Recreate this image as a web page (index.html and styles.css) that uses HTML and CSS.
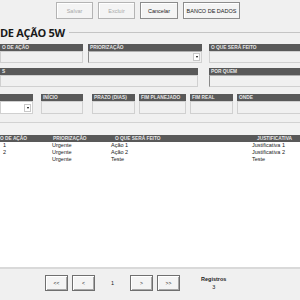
FILE: index.html
```html
<!doctype html>
<html lang="pt">

<head>
  <title>Plano de Ação 5W</title>
  <meta charset="utf-8">
  <link rel="stylesheet" href="styles.css">
</head>

<body>
  <div class="page">
    <div class="toolbar">
      <button class="btn btn-top btn-salvar" disabled>Salvar</button>
      <button class="btn btn-top btn-excluir" disabled>Excluir</button>
      <button class="btn btn-top btn-cancelar">Cancelar</button>
      <button class="btn btn-top btn-banco">BANCO DE DADOS</button>
    </div>

    <div class="group-title">
      <span class="title">DE AÇÃO 5W</span>
      <span class="rule"></span>
    </div>

    <!-- linha 1 -->
    <div class="form-row row-1">
      <div class="field f-tipo">
        <div class="field-label">O DE AÇÃO</div>
        <div class="field-input"></div>
      </div>
      <div class="field f-prior">
        <div class="field-label">PRIORIZAÇÃO</div>
        <div class="field-input sunken select">
          <span class="drop"></span>
        </div>
      </div>
      <div class="field f-oque">
        <div class="field-label">O QUE SERÁ FEITO</div>
        <div class="field-input"></div>
      </div>
    </div>

    <!-- linha 2 -->
    <div class="form-row row-2">
      <div class="field f-just">
        <div class="field-label">S</div>
        <div class="field-input"></div>
      </div>
      <div class="field f-quem">
        <div class="field-label">POR QUEM</div>
        <div class="field-input sunken"></div>
      </div>
    </div>

    <!-- linha 3 -->
    <div class="form-row row-3">
      <div class="field f-resp">
        <div class="field-label"></div>
        <div class="field-input select white">
          <span class="drop"></span>
        </div>
      </div>
      <div class="field f-inicio">
        <div class="field-label">INÍCIO</div>
        <div class="field-input"></div>
      </div>
      <div class="field f-prazo">
        <div class="field-label">PRAZO (DIAS)</div>
        <div class="field-input"></div>
      </div>
      <div class="field f-fimplan">
        <div class="field-label">FIM PLANEJADO</div>
        <div class="field-input"></div>
      </div>
      <div class="field f-fimreal">
        <div class="field-label">FIM REAL</div>
        <div class="field-input"></div>
      </div>
      <div class="field f-onde">
        <div class="field-label">ONDE</div>
        <div class="field-input"></div>
      </div>
    </div>

    <div class="grid-panel">
      <div class="grid-strip"></div>
      <div class="grid">
        <div class="grid-head">
          <div class="col c1 head-c1">O DE AÇÃO</div>
          <div class="col c2">PRIORIZAÇÃO</div>
          <div class="col c3">O QUE SERÁ FEITO</div>
          <div class="col c4">JUSTIFICATIVA</div>
        </div>
        <div class="grid-row">
          <div class="col c1">1</div>
          <div class="col c2">Urgente</div>
          <div class="col c3">Ação 1</div>
          <div class="col c4">Justificativa 1</div>
        </div>
        <div class="grid-row">
          <div class="col c1">2</div>
          <div class="col c2">Urgente</div>
          <div class="col c3">Ação 2</div>
          <div class="col c4">Justificativa 2</div>
        </div>
        <div class="grid-row">
          <div class="col c1"></div>
          <div class="col c2">Urgente</div>
          <div class="col c3">Teste</div>
          <div class="col c4">Teste</div>
        </div>
      </div>
    </div>

    <div class="pager">
      <button class="btn btn-page">&lt;&lt;</button>
      <button class="btn btn-page">&lt;</button>
      <span class="page-num">1</span>
      <button class="btn btn-page">&gt;</button>
      <button class="btn btn-page">&gt;&gt;</button>
      <div class="records">
        <div class="records-title">Registros</div>
        <div class="records-count">3</div>
      </div>
    </div>
  </div>
</body>

</html>
```

FILE: styles.css
```css
html,
body {
  margin: 0;
  padding: 0;
}

body {
  width: 300px;
  height: 300px;
  overflow: hidden;
  background-color: #f0f0f0;
  font-family: 'Liberation Sans', Arial, sans-serif;
  color: #1a1a1a;
}

.page {
  width: 300px;
  height: 300px;
  display: flex;
  flex-direction: column;
  overflow: hidden;
}

/* barra de botões */
.toolbar {
  display: flex;
  gap: 5px;
  height: 22px;
  padding: 2px 0 0 56px;
  box-sizing: border-box;
}

.btn {
  margin: 0;
  padding: 0;
  font-family: 'Liberation Sans', Arial, sans-serif;
  font-size: 5.5px;
  background-color: #f4f4f4;
  border: 1px solid #8c8c8c;
  box-shadow: inset 1px 1px 0 #ffffff;
  color: #1a1a1a;
}

.btn-top {
  height: 17px;
}

.btn-top[disabled] {
  color: #a8a8a8;
  border-color: #b4b4b4;
}

.btn-salvar,
.btn-excluir {
  width: 37px;
}

.btn-cancelar {
  width: 38px;
}

.btn-banco {
  width: 57px;
}

/* título do grupo */
.group-title {
  display: flex;
  align-items: center;
  height: 20px;
}

.title {
  font-family: 'Open Sans', 'Noto Sans', sans-serif;
  font-weight: bold;
  font-size: 11px;
  letter-spacing: -0.3px;
  white-space: nowrap;
}

.rule {
  flex: 1;
  margin-left: 4px;
  border-top: 1px solid #c4c4c4;
}

/* campos */
.form-row {
  display: flex;
  flex-shrink: 0;
}

.row-1 {
  margin-top: 2px;
}

.row-2 {
  margin-top: 5px;
}

.row-3 {
  margin-top: 7px;
}

.field {
  flex-shrink: 0;
  display: flex;
  flex-direction: column;
}

.field-label {
  height: 7px;
  background-color: #595959;
  color: #e6e6e6;
  font-size: 4.8px;
  font-weight: bold;
  line-height: 7px;
  padding-left: 2px;
  white-space: nowrap;
  overflow: hidden;
}

.field-input {
  height: 12px;
  box-sizing: border-box;
  border: 1px solid #d0d0d0;
  background-color: #f0f0f0;
  display: flex;
  justify-content: flex-end;
  align-items: center;
}

.row-3 .field-input {
  height: 13px;
}

.field-input.sunken {
  border-left-color: #8a8a8a;
  border-top-color: #b0b0b0;
}

.field-input.white {
  background-color: #ffffff;
}

.drop {
  width: 7px;
  height: 8px;
  margin-right: 1px;
  box-sizing: border-box;
  background-color: #ffffff;
  border: 1px solid #c8c8c8;
  display: flex;
  align-items: center;
  justify-content: center;
}

.drop::after {
  content: '';
  border-left: 1.5px solid transparent;
  border-right: 1.5px solid transparent;
  border-top: 2px solid #000000;
}

.f-tipo {
  width: 83px;
}

.f-prior {
  width: 114px;
  margin-left: 5px;
}

.f-oque {
  width: 100px;
  margin-left: 7px;
}

.f-just {
  width: 198px;
}

.f-quem {
  width: 100px;
  margin-left: 11px;
}

.f-resp {
  width: 33px;
}

.f-inicio {
  width: 42px;
  margin-left: 8px;
}

.f-prazo {
  width: 43px;
  margin-left: 9px;
}

.f-fimplan {
  width: 47px;
  margin-left: 4px;
}

.f-fimreal {
  width: 43px;
  margin-left: 4px;
}

.f-onde {
  width: 70px;
  margin-left: 4px;
}

/* grade */
.grid-panel {
  margin-top: 8px;
  height: 145px;
  flex-shrink: 0;
  display: flex;
  flex-direction: column;
  border-bottom: 2px solid #d9d9d9;
}

.grid-strip {
  height: 13px;
  border-top: 1px solid #d2d2d2;
  box-sizing: border-box;
  background-color: #f2f2f2;
}

.grid {
  flex: 1;
  background-color: #ffffff;
  font-size: 5.5px;
}

.grid-head {
  display: flex;
  height: 7px;
  line-height: 7px;
  background-color: #595959;
  color: #e6e6e6;
  font-weight: bold;
  font-size: 4.8px;
}

.grid-row {
  display: flex;
  height: 7px;
  line-height: 7px;
}

.col {
  flex-shrink: 0;
  white-space: nowrap;
  overflow: hidden;
}

.c1 {
  width: 50px;
  padding-left: 3px;
  box-sizing: border-box;
}

.head-c1 {
  padding-left: 0;
}

.c2 {
  width: 60px;
  padding-left: 2px;
  box-sizing: border-box;
}

.c3 {
  width: 140px;
  padding-left: 1px;
  box-sizing: border-box;
}

.c4 {
  width: 60px;
  padding-left: 2px;
  box-sizing: border-box;
}

.grid-head .c2 {
  padding-left: 3px;
}

.grid-head .c3 {
  padding-left: 5px;
}

.grid-head .c4 {
  padding-left: 7px;
}

/* paginação */
.pager {
  flex: 1;
  display: flex;
  align-items: flex-start;
  padding: 6px 0 0 45px;
}

.btn-page {
  width: 23px;
  height: 16px;
  margin-right: 4px;
  border-color: #6f6f6f;
  box-shadow: inset 1px 1px 0 #ffffff, inset -1px -1px 0 #a8a8a8;
  font-size: 5px;
}

.page-num {
  width: 27px;
  margin-right: 4px;
  text-align: center;
  font-size: 5.5px;
  line-height: 16px;
}

.records {
  margin-left: 17px;
  margin-top: 1px;
  text-align: center;
  font-size: 5.5px;
}

.records-title {
  font-weight: bold;
}

.records-count {
  margin-top: 2px;
}
```
